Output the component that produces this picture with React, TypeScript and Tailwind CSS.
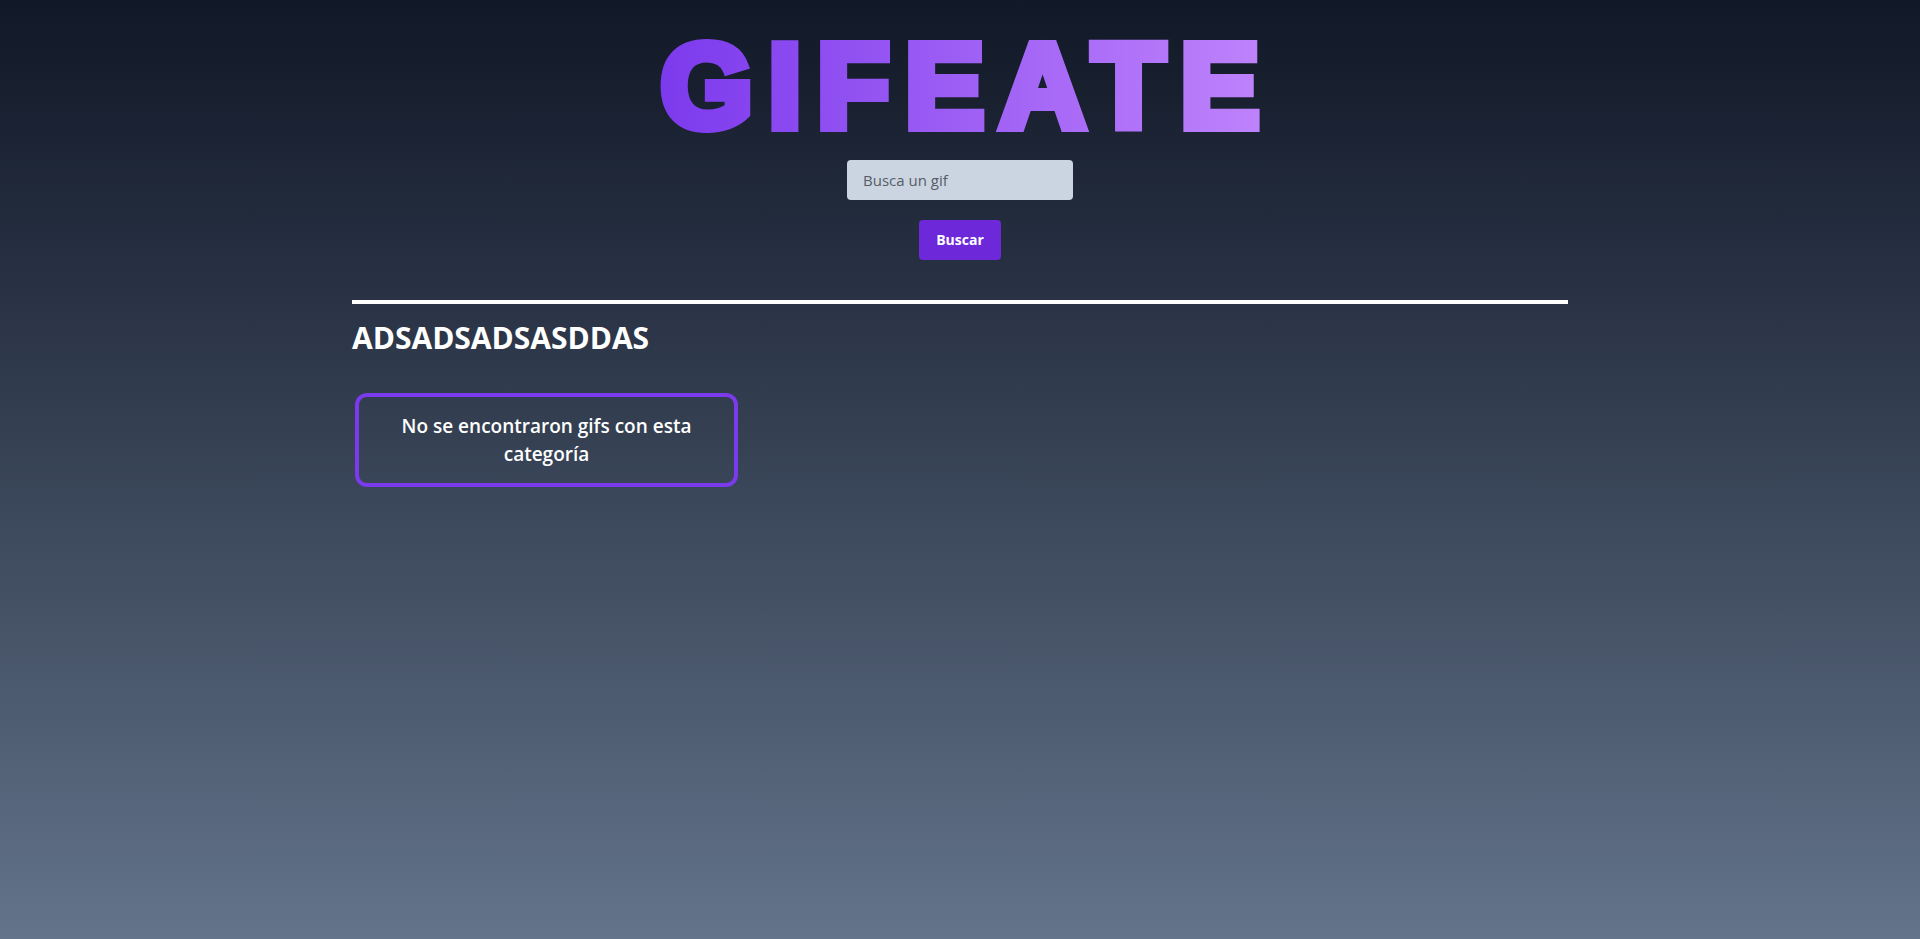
import { useState } from "react";

function Title() {
  // heavy gradient wordmark: stroke thickens the bold glyphs
  return (
    <h1 className="leading-none">
      <svg width="624" height="134" viewBox="0 0 624 134" className="block overflow-visible">
        <defs>
          <linearGradient id="title-grad" x1="0" y1="0" x2="1" y2="0">
            <stop offset="0" stopColor="#7c3aed" />
            <stop offset="1" stopColor="#c084fc" />
          </linearGradient>
        </defs>
        <text
          x="320"
          y="108"
          textAnchor="middle"
          fontFamily="'Liberation Sans', Arial, sans-serif"
          fontWeight="700"
          fontSize="118"
          letterSpacing="16"
          fill="url(#title-grad)"
          stroke="url(#title-grad)"
          strokeWidth="10"
          strokeLinejoin="miter"
        >
          GIFEATE
        </text>
      </svg>
    </h1>
  );
}

export default function App() {
  const [query, setQuery] = useState("");
  const categories = ["ADSADSADSASDDAS"];

  return (
    <div className="min-h-screen bg-gradient-to-b from-[#111827] to-[#64748b] font-['Open_Sans',sans-serif] text-white">
      {/* Header */}
      <header className="flex flex-col items-center pt-[19px]">
        <Title />

        <form
          className="mt-[7px] flex flex-col items-center"
          onSubmit={(e) => e.preventDefault()}
        >
          <input
            value={query}
            onChange={(e) => setQuery(e.target.value)}
            placeholder="Busca un gif"
            className="h-10 w-[226px] rounded bg-[#cbd5e1] px-4 text-[15px] text-[#1f2937] outline-none placeholder:text-[#565c66]"
          />
          <button className="mt-5 h-10 w-[82px] rounded bg-[#6d28d9] text-sm font-bold text-white">
            Buscar
          </button>
        </form>
      </header>

      {/* Results */}
      <main className="mx-auto mt-10 max-w-7xl px-8">
        {categories.map((category) => (
          <section key={category}>
            <div className="h-1 w-full bg-white" />
            <h2 className="mt-4 text-[30px] font-bold leading-[36px]">{category}</h2>
            <div className="mt-[37px] flex flex-wrap gap-8">
              <div className="ml-[3px] w-[383px] rounded-xl border-4 border-[#7c3aed] px-6 py-[15px] text-center text-[19px] font-semibold leading-7">
                No se encontraron gifs con esta categoría
              </div>
            </div>
          </section>
        ))}
      </main>
    </div>
  );
}
